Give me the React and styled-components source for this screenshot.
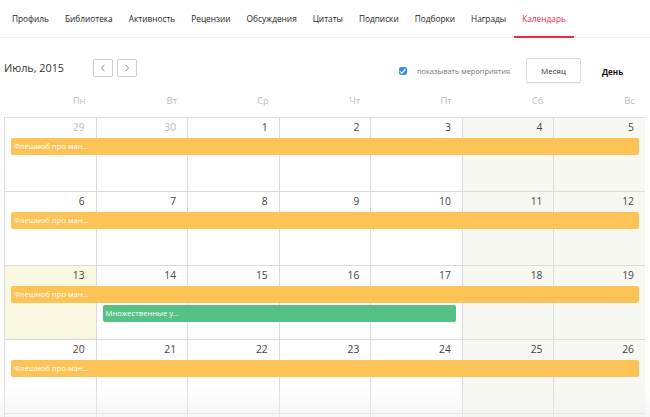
import React from 'react';
import styled, { createGlobalStyle } from 'styled-components';

const GlobalStyle = createGlobalStyle`
  html, body {
    margin: 0;
    padding: 0;
    background: #fff;
    overflow: hidden;
  }
  body {
    font-family: "Open Sans", "Noto Sans", sans-serif;
    color: #333;
  }
`;

const tabs = ['Профиль', 'Библиотека', 'Активность', 'Рецензии', 'Обсуждения', 'Цитаты', 'Подписки', 'Подборки', 'Награды', 'Календарь'];
const dayNames = ['Пн', 'Вт', 'Ср', 'Чт', 'Пт', 'Сб', 'Вс'];

const weeks = [
  {
    days: [29, 30, 1, 2, 3, 4, 5],
    muted: [0, 1],
    events: [{ title: 'Флешмоб про ман...', from: 1, span: 7, color: 'orange' }],
  },
  {
    days: [6, 7, 8, 9, 10, 11, 12],
    events: [{ title: 'Флешмоб про ман...', from: 1, span: 7, color: 'orange' }],
  },
  {
    days: [13, 14, 15, 16, 17, 18, 19],
    today: 0,
    events: [
      { title: 'Флешмоб про ман...', from: 1, span: 7, color: 'orange' },
      { title: 'Множественные у...', from: 2, span: 4, color: 'green' },
    ],
  },
  {
    days: [20, 21, 22, 23, 24, 25, 26],
    events: [{ title: 'Флешмоб про ман...', from: 1, span: 7, color: 'orange' }],
  },
  {
    // next week, only its top edge is in view
    days: ['', '', '', '', '', '', ''],
    events: [],
  },
];

const Chevron = ({ dir }) => (
  <svg width="6" height="8" viewBox="0 0 6 8">
    <path
      d={dir === 'left' ? 'M4.5 0.8 L1.5 4 L4.5 7.2' : 'M1.5 0.8 L4.5 4 L1.5 7.2'}
      fill="none"
      stroke="#777"
      strokeWidth="0.9"
    />
  </svg>
);

export default function App() {
  return (
    <Page>
      <GlobalStyle />
      <Tabs>
        {tabs.map((t) => (
          <Tab key={t} $active={t === 'Календарь'}>{t}</Tab>
        ))}
      </Tabs>

      <Toolbar>
        <Title>Июль, 2015</Title>
        <Arrows>
          <ArrowButton><Chevron dir="left" /></ArrowButton>
          <ArrowButton><Chevron dir="right" /></ArrowButton>
        </Arrows>
        <Spacer />
        <CheckLabel>
          <CheckBox>
            <svg width="7" height="7" viewBox="0 0 10 10">
              <path d="M1.5 5.2 L4 7.6 L8.6 2.4" fill="none" stroke="#fff" strokeWidth="1.8" strokeLinecap="round" strokeLinejoin="round" />
            </svg>
          </CheckBox>
          показывать мероприятия
        </CheckLabel>
        <ViewButton>Месяц</ViewButton>
        <ViewLink>День</ViewLink>
      </Toolbar>

      <Calendar>
        <DayHeads>
          {dayNames.map((d) => (
            <DayHead key={d}>{d}</DayHead>
          ))}
        </DayHeads>
        {weeks.map((w, wi) => (
          <Week key={wi}>
            {w.days.map((d, i) => (
              <Cell
                key={'c' + i}
                style={{ gridColumn: i + 1 }}
                $weekend={i >= 5}
                $today={w.today === i}
              />
            ))}
            {w.days.map((d, i) => (
              <DateNum key={'d' + i} style={{ gridColumn: i + 1 }} $muted={w.muted && w.muted.includes(i)}>
                {d}
              </DateNum>
            ))}
            {w.events.map((e, ei) => (
              <Event
                key={'e' + ei}
                $color={e.color}
                style={{ gridColumn: `${e.from} / span ${e.span}`, gridRow: ei + 2 }}
              >
                {e.title}
              </Event>
            ))}
          </Week>
        ))}
        <Fade />
      </Calendar>
    </Page>
  );
}

const Page = styled.div`
  width: 650px;
  height: 417px;
  position: relative;
  overflow: hidden;
`;

const Tabs = styled.nav`
  display: flex;
  height: 38px;
  padding-left: 4px;
  border-bottom: 1px solid #ececec;
  box-sizing: border-box;
`;

const Tab = styled.div`
  position: relative;
  display: flex;
  align-items: center;
  padding: 0 8px;
  font-size: 8.3px;
  color: ${(p) => (p.$active ? '#ee2a45' : '#222')};
  white-space: nowrap;
  margin-top: -1px;
  ${(p) =>
    p.$active &&
    `
    &::after {
      content: '';
      position: absolute;
      left: 0;
      right: 0;
      bottom: -1px;
      height: 2px;
      background: #ee2a45;
    }
  `}
`;

const Toolbar = styled.div`
  display: flex;
  align-items: center;
  height: 49px;
  padding: 14px 4px 0 4px;
  box-sizing: border-box;
`;

const Title = styled.div`
  font-size: 10.8px;
  color: #333;
  width: 89px;
  margin-top: -4px;
`;

const Arrows = styled.div`
  display: flex;
  gap: 4px;
  margin-top: -3px;
`;

const ArrowButton = styled.div`
  width: 20px;
  height: 18px;
  box-sizing: border-box;
  border: 1px solid #cfcfcf;
  border-radius: 2px;
  display: flex;
  align-items: center;
  justify-content: center;
`;

const Spacer = styled.div`
  flex: 1;
`;

const CheckLabel = styled.div`
  display: flex;
  align-items: center;
  gap: 10px;
  font-size: 7.4px;
  color: #777;
  margin-top: 3px;
`;

const CheckBox = styled.span`
  width: 8px;
  height: 8px;
  border-radius: 2px;
  background: #3b8ff0;
  display: inline-flex;
  align-items: center;
  justify-content: center;
`;

const ViewButton = styled.div`
  margin-left: 16px;
  width: 55px;
  height: 25px;
  box-sizing: border-box;
  border: 1px solid #d9d9d9;
  border-radius: 2px;
  box-shadow: 0 1px 1px rgba(0, 0, 0, 0.06);
  display: flex;
  align-items: center;
  justify-content: center;
  font-size: 8px;
  color: #333;
  margin-top: 2px;
`;

const ViewLink = styled.div`
  margin-left: 21px;
  width: 44px;
  font-size: 8px;
  font-weight: 700;
  color: #111;
  margin-top: 3px;
`;

const Calendar = styled.div`
  margin-left: 4px;
  width: 641px;
`;

const DayHeads = styled.div`
  display: grid;
  grid-template-columns: repeat(7, 1fr);
  height: 30px;
  align-items: center;
`;

const DayHead = styled.div`
  text-align: right;
  padding-right: 10px;
  font-size: 9.5px;
  color: #bdbdbd;
  margin-top: -4px;
`;

const Week = styled.div`
  display: grid;
  grid-template-columns: repeat(7, 1fr);
  grid-template-rows: 19px 17px 17px 1fr;
  row-gap: 2px;
  height: 74px;
`;

const Cell = styled.div`
  grid-row: 1 / -1;
  border-top: 1px solid #dcdcdc;
  border-left: 1px solid #dcdcdc;
  background: ${(p) => (p.$today ? '#fbf8e1' : p.$weekend ? '#f8f8f3' : '#fff')};
`;

const DateNum = styled.div`
  grid-row: 1;
  text-align: right;
  padding-right: 11px;
  padding-top: 3px;
  font-size: 10.3px;
  color: ${(p) => (p.$muted ? '#bbb' : '#444')};
  z-index: 1;
`;

const Event = styled.div`
  margin: 0 6px 0 7px;
  height: 17px;
  border-radius: 2px;
  background: ${(p) => (p.$color === 'green' ? '#54c287' : '#fec357')};
  color: #fff;
  font-size: 7.6px;
  line-height: 17px;
  padding-left: 3px;
  white-space: nowrap;
  overflow: hidden;
  z-index: 1;
`;

const Fade = styled.div`
  position: absolute;
  left: 0;
  right: 0;
  bottom: 0;
  height: 30px;
  pointer-events: none;
  background: linear-gradient(to bottom, rgba(240, 240, 240, 0), rgba(238, 238, 238, 0.55));
`;
